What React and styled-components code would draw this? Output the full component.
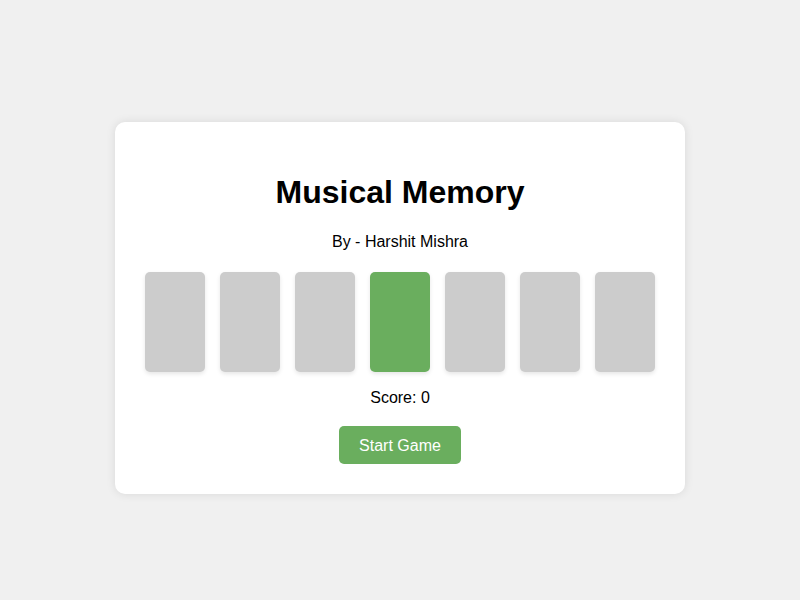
import React from "react";
import styled, { createGlobalStyle } from "styled-components";

const Global = createGlobalStyle`
  html, body { margin: 0; padding: 0; background: #f0f0f0; }
  body { font-family: "Liberation Sans", Arial, Helvetica, sans-serif; }
`;

const Page = styled.div`
  height: 100vh;
  padding: 8px;
  display: flex;
  align-items: center;
  justify-content: center;
`;

const Card = styled.div`
  background: #fff;
  border-radius: 10px;
  box-shadow: 0 0 10px rgba(0, 0, 0, 0.1);
  padding: 30px;
  text-align: center;
`;

const Title = styled.h1`
  font-size: 32px;
  font-weight: bold;
  margin: 21.44px 0 22.44px;
  color: #000;
`;

const Byline = styled.p`
  font-size: 16px;
  margin: 0 0 21px;
  color: #000;
`;

const Tiles = styled.div`
  display: flex;
  gap: 15px;
  justify-content: center;
`;

const Tile = styled.div`
  width: 60px;
  height: 100px;
  border-radius: 5px;
  background: ${(p) => (p.$active ? "#6aae5e" : "#cccccc")};
  box-shadow: 0 2px 4px rgba(0, 0, 0, 0.1);
`;

const Score = styled.p`
  font-size: 16px;
  margin: 17px 0 19px;
  color: #000;
`;

const Button = styled.button`
  font-family: inherit;
  font-size: 16px;
  padding: 11px 20px 9px;
  border: none;
  border-radius: 5px;
  background: #6aae5e;
  color: #fff;
  cursor: pointer;
  line-height: 18px;
`;

export default function App() {
  return (
    <>
      <Global />
      <Page>
        <Card>
          <Title>Musical Memory</Title>
          <Byline>By - Harshit Mishra</Byline>
          <Tiles>
            {[0, 1, 2, 3, 4, 5, 6].map((i) => (
              <Tile key={i} $active={i === 3} />
            ))}
          </Tiles>
          <Score>Score: 0</Score>
          <Button>Start Game</Button>
        </Card>
      </Page>
    </>
  );
}
